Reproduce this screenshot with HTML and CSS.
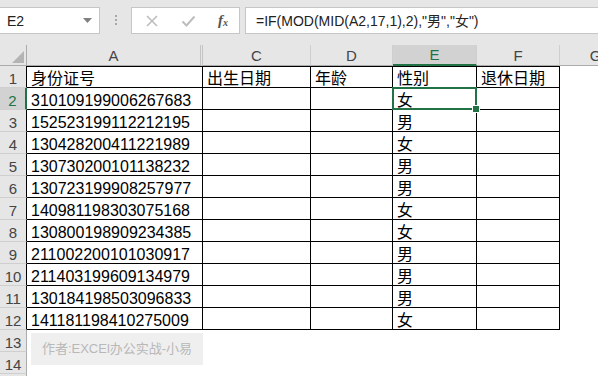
FILE: index.html
```html
<!DOCTYPE html>
<html lang="zh-CN">
<head>
    <meta charset="UTF-8">
    <title>身份证号 - 性别</title>
    <link rel="stylesheet" href="styles.css">
</head>
<body>
    <div class="formula-bar">
        <div class="name-box">
            <span class="cell-ref">E2</span>
            <svg class="drop" width="9" height="5" viewBox="0 0 9 5"><path d="M0 0H9L4.5 5Z" fill="#808080"/></svg>
        </div>
        <div class="grip"><i></i><i></i><i></i></div>
        <div class="fx-box">
            <svg class="btn" width="14" height="14" viewBox="0 0 14 14"><path d="M2 2L12 12M12 2L2 12" stroke="#bdbdbd" stroke-width="1.6" fill="none"/></svg>
            <svg class="btn" width="15" height="14" viewBox="0 0 15 14"><path d="M1.5 7.5L5.5 11.5L13.5 2.5" stroke="#bdbdbd" stroke-width="2" fill="none"/></svg>
            <span class="fx">f<sub>x</sub></span>
        </div>
        <div class="formula">=IF(MOD(MID(A2,17,1),2),"男","女")</div>
    </div>

    <div class="sheet-wrap">
        <table class="sheet">
            <colgroup>
                <col class="c-row">
                <col class="c-a">
                <col class="c-c">
                <col class="c-d">
                <col class="c-e">
                <col class="c-f">
                <col class="c-g">
            </colgroup>
            <thead>
                <tr class="col-heads">
                    <th class="corner"><svg width="12" height="12" viewBox="0 0 12 12"><path d="M12 0V12H0Z" fill="#b4b4b4"/></svg></th>
                    <th class="hidden-next">A</th>
                    <th>C</th>
                    <th>D</th>
                    <th class="active">E</th>
                    <th>F</th>
                    <th>G</th>
                </tr>
            </thead>
            <tbody>
                <tr class="first"><td class="rn">1</td><td class="d">身份证号</td><td class="d">出生日期</td><td class="d">年龄</td><td class="d">性别</td><td class="d">退休日期</td><td></td></tr>
                <tr><td class="rn active">2</td><td class="d">310109199006267683</td><td class="d"></td><td class="d"></td><td class="d sel">女</td><td class="d"></td><td></td></tr>
                <tr><td class="rn">3</td><td class="d">152523199112212195</td><td class="d"></td><td class="d"></td><td class="d">男</td><td class="d"></td><td></td></tr>
                <tr><td class="rn">4</td><td class="d">130428200411221989</td><td class="d"></td><td class="d"></td><td class="d">女</td><td class="d"></td><td></td></tr>
                <tr><td class="rn">5</td><td class="d">130730200101138232</td><td class="d"></td><td class="d"></td><td class="d">男</td><td class="d"></td><td></td></tr>
                <tr><td class="rn">6</td><td class="d">130723199908257977</td><td class="d"></td><td class="d"></td><td class="d">男</td><td class="d"></td><td></td></tr>
                <tr><td class="rn">7</td><td class="d">140981198303075168</td><td class="d"></td><td class="d"></td><td class="d">女</td><td class="d"></td><td></td></tr>
                <tr><td class="rn">8</td><td class="d">130800198909234385</td><td class="d"></td><td class="d"></td><td class="d">女</td><td class="d"></td><td></td></tr>
                <tr><td class="rn">9</td><td class="d">211002200101030917</td><td class="d"></td><td class="d"></td><td class="d">男</td><td class="d"></td><td></td></tr>
                <tr><td class="rn">10</td><td class="d">211403199609134979</td><td class="d"></td><td class="d"></td><td class="d">男</td><td class="d"></td><td></td></tr>
                <tr><td class="rn">11</td><td class="d">130184198503096833</td><td class="d"></td><td class="d"></td><td class="d">男</td><td class="d"></td><td></td></tr>
                <tr><td class="rn">12</td><td class="d">141181198410275009</td><td class="d"></td><td class="d"></td><td class="d">女</td><td class="d"></td><td></td></tr>
                <tr><td class="rn plain">13</td><td></td><td></td><td></td><td></td><td></td><td></td></tr>
                <tr><td class="rn plain">14</td><td></td><td></td><td></td><td></td><td></td><td></td></tr>
                <tr><td class="rn plain"></td><td></td><td></td><td></td><td></td><td></td><td></td></tr>
            </tbody>
        </table>
        <!-- floating text box over the sheet -->
        <div class="watermark">作者:EXCEl办公实战-小易</div>
    </div>
</body>
</html>
```

FILE: styles.css
```css
* {
    box-sizing: border-box;
}
body {
    margin: 0;
    background-color: #fff;
    font-family: "Liberation Sans", Arial, "Noto Sans CJK SC", sans-serif;
    overflow: hidden;
}

/* formula bar */
.formula-bar {
    display: flex;
    align-items: flex-start;
    height: 45px;
    padding-top: 7px;
    background-color: #e6e6e6;
}
.name-box {
    display: flex;
    align-items: center;
    justify-content: space-between;
    width: 100px;
    height: 27px;
    padding: 0 7px 0 7px;
    background-color: #fff;
    border: 1px solid #c6c6c6;
    border-left: none;
}
.cell-ref {
    font-size: 14px;
    color: #222;
}
.grip {
    display: flex;
    flex-direction: column;
    gap: 2px;
    margin: 8px 0 0 15px;
    width: 2px;
}
.grip i {
    display: block;
    width: 2px;
    height: 2px;
    background-color: #a8a8a8;
}
.fx-box {
    display: flex;
    align-items: center;
    width: 109px;
    height: 27px;
    margin-left: 14px;
    padding-left: 13px;
    background-color: #fff;
    border: 1px solid #c6c6c6;
}
.fx-box .btn {
    margin-right: 22px;
}
.fx {
    font-family: "Liberation Serif", serif;
    font-style: italic;
    font-weight: bold;
    font-size: 15px;
    color: #555;
}
.fx sub {
    font-size: 10px;
    vertical-align: -1px;
}
.formula {
    flex: 1;
    height: 27px;
    margin-left: 5px;
    padding: 4px 0 0 10px;
    background-color: #fff;
    border: 1px solid #c6c6c6;
    border-right: none;
    font-size: 14px;
    line-height: 18px;
    color: #222;
    white-space: nowrap;
}

/* grid */
.sheet-wrap {
    position: relative;
}
.sheet {
    border-collapse: separate;
    border-spacing: 0;
    table-layout: fixed;
    width: 632px;
}
.c-row { width: 27px; }
.c-a { width: 176px; }
.c-c { width: 108px; }
.c-d { width: 82px; }
.c-e { width: 84px; }
.c-f { width: 83px; }
.c-g { width: 72px; }

.col-heads {
    height: 21px;
}
.col-heads th {
    padding: 0 0 1px 0;
    background-color: #e6e6e6;
    border-right: 1px solid #cfcfcf;
    border-bottom: 1px solid #ababab;
    font-weight: normal;
    font-size: 15px;
    line-height: 16px;
    color: #444;
    vertical-align: bottom;
}
.col-heads th.corner {
    border-right: 1px solid #ababab;
    padding: 0 2px 2px 0;
}
.col-heads th.corner svg {
    display: block;
    margin-left: auto;
}
.col-heads th.hidden-next {
    border-right: 3px double #c4c4c4;
}
.col-heads th.active {
    background-color: #d2d2d2;
    color: #217346;
    border-bottom: 2px solid #217346;
}

.sheet tbody tr {
    height: 22px;
}
.sheet td {
    padding: 0 4px;
    font-size: 16px;
    line-height: 16px;
    vertical-align: bottom;
    white-space: nowrap;
    overflow: hidden;
    color: #000;
}
.sheet td.rn {
    padding: 0;
    text-align: center;
    background-color: #e6e6e6;
    border-right: 1px solid #000;
    border-bottom: 1px solid #cfcfcf;
    font-size: 15px;
    color: #444;
}
.sheet td.rn.plain {
    border-right: 1px solid #ababab;
}
.sheet td.rn.active {
    background-color: #d2d2d2;
    color: #217346;
    border-right: 2px solid #217346;
}
.sheet td.d {
    border-right: 1px solid #000;
    border-bottom: 1px solid #000;
}
.sheet tr.first td.d {
    border-top: 1px solid #000;
}

/* active cell */
.sheet td.sel {
    position: relative;
    overflow: visible;
}
.sheet td.sel::before {
    content: "";
    position: absolute;
    left: -1px;
    top: -1px;
    right: -1px;
    bottom: -1px;
    border: 2px solid #217346;
}
.sheet td.sel::after {
    content: "";
    position: absolute;
    right: -4px;
    bottom: -4px;
    width: 6px;
    height: 6px;
    background-color: #217346;
    border: 1px solid #fff;
}

.watermark {
    position: absolute;
    left: 31px;
    top: 288px;
    width: 172px;
    height: 32px;
    padding-top: 7px;
    text-align: center;
    background-color: #efefef;
    color: #b8b8b8;
    font-size: 13px;
    line-height: 18px;
}
```
